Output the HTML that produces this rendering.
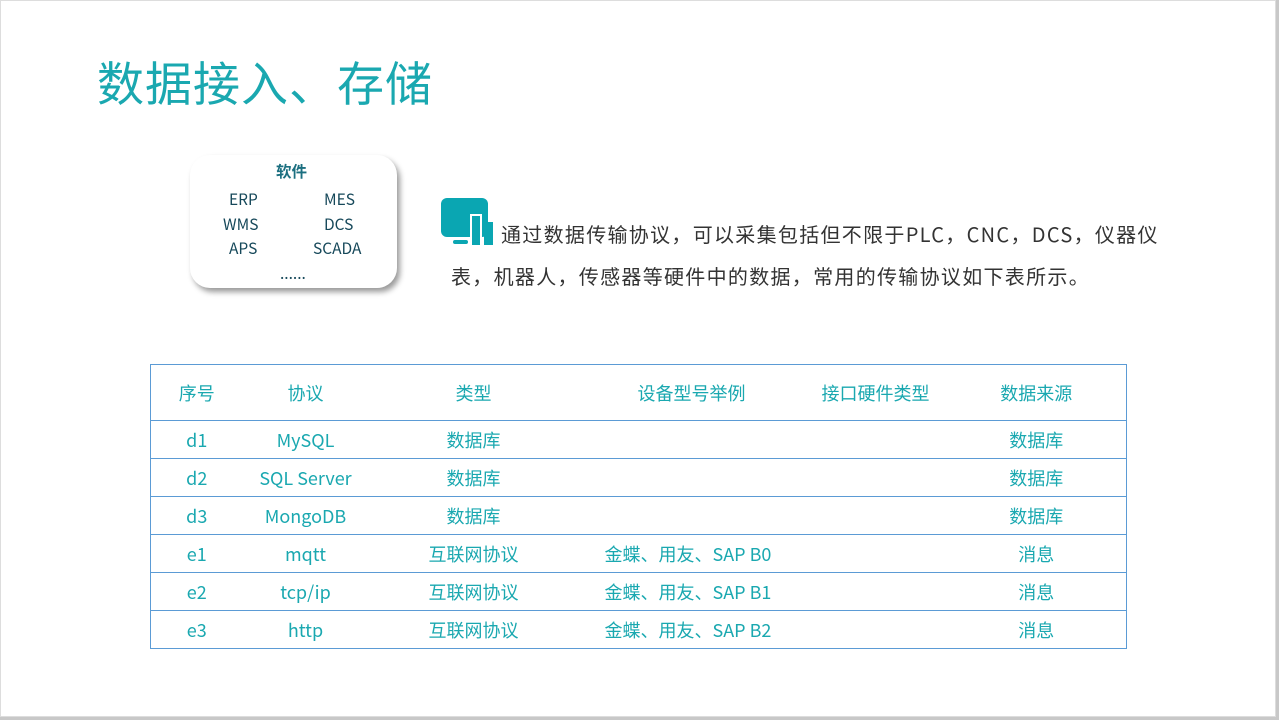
<!DOCTYPE html>
<html><head><meta charset="utf-8"><style>
body{margin:0;width:1279px;height:720px;overflow:hidden;background:#fff;font-family:"Liberation Sans","Noto Sans CJK SC",sans-serif;position:relative}
.frame{position:absolute;left:0;top:0;width:1276px;height:717px;border-right:3px solid #c8c8c8;border-bottom:3px solid #c8c8c8;box-shadow:inset 0 0 0 1px #ddd}
.title{position:absolute;left:97px;top:46px;font-size:47px;color:#1aa8b0;letter-spacing:1px;font-family:"Noto Sans CJK SC",sans-serif}
.box{position:absolute;left:190px;top:155px;width:207px;height:133px;border-radius:20px;background:#fff;box-shadow:3px 4px 6px rgba(0,0,0,.4);color:#16485a;font-size:15.5px;font-family:"Noto Sans CJK SC",sans-serif}
.box div{position:absolute;line-height:20px}
.para{position:absolute;left:451px;top:213px;white-space:nowrap;font-size:20px;color:#333;line-height:42px;letter-spacing:1.3px;font-family:"Noto Sans CJK SC",sans-serif}
table{position:absolute;left:150px;top:364px;width:977px;border-collapse:collapse;border:1px solid #5b9bd5;color:#1aa8b0;font-size:18px;font-family:"Noto Sans CJK SC",sans-serif}
td{border-top:1px solid #5b9bd5;height:37px;text-align:center;padding:0}
tr.h td{height:55px;border-top:none}
td.l{text-align:left;padding-left:26px}
</style></head><body>
<div class="frame"></div>
<div class="title">数据接入、存储</div>
<div class="box">
<div style="left:86px;top:6px;font-weight:bold;color:#1b6f80">软件</div>
<div style="left:39px;top:34px">ERP</div><div style="left:134px;top:34px">MES</div>
<div style="left:33px;top:59px">WMS</div><div style="left:134px;top:59px">DCS</div>
<div style="left:39px;top:83px">APS</div><div style="left:123px;top:83px">SCADA</div>
<div style="left:90px;top:108px">......</div>
</div>
<svg style="position:absolute;left:441px;top:198px" width="53" height="48">
<rect x="0" y="0" width="47" height="39" rx="6" fill="#0aa6b2"/>
<rect x="29" y="16" width="12" height="32" fill="#fff"/>
<rect x="31" y="18" width="8" height="29" fill="#0aa6b2"/>
<rect x="43" y="24" width="9" height="23" fill="#0aa6b2"/>
<rect x="12" y="42" width="15" height="4" rx="2" fill="#0aa6b2"/>
</svg>
<div class="para"><span style="padding-left:50px"></span>通过数据传输协议，可以采集包括但不限于PLC，CNC，DCS，仪器仪<br>表，机器人，传感器等硬件中的数据，常用的传输协议如下表所示。</div>
<table>
<colgroup><col style="width:92px"><col style="width:126px"><col style="width:210px"><col style="width:226px"><col style="width:142px"><col></colgroup>
<tr class="h"><td>序号</td><td>协议</td><td>类型</td><td>设备型号举例</td><td>接口硬件类型</td><td>数据来源</td></tr>
<tr><td>d1</td><td>MySQL</td><td>数据库</td><td></td><td></td><td>数据库</td></tr>
<tr><td>d2</td><td>SQL Server</td><td>数据库</td><td></td><td></td><td>数据库</td></tr>
<tr><td>d3</td><td>MongoDB</td><td>数据库</td><td></td><td></td><td>数据库</td></tr>
<tr><td>e1</td><td>mqtt</td><td>互联网协议</td><td class="l">金蝶、用友、SAP B0</td><td></td><td>消息</td></tr>
<tr><td>e2</td><td>tcp/ip</td><td>互联网协议</td><td class="l">金蝶、用友、SAP B1</td><td></td><td>消息</td></tr>
<tr><td>e3</td><td>http</td><td>互联网协议</td><td class="l">金蝶、用友、SAP B2</td><td></td><td>消息</td></tr>
</table>
</body></html>
